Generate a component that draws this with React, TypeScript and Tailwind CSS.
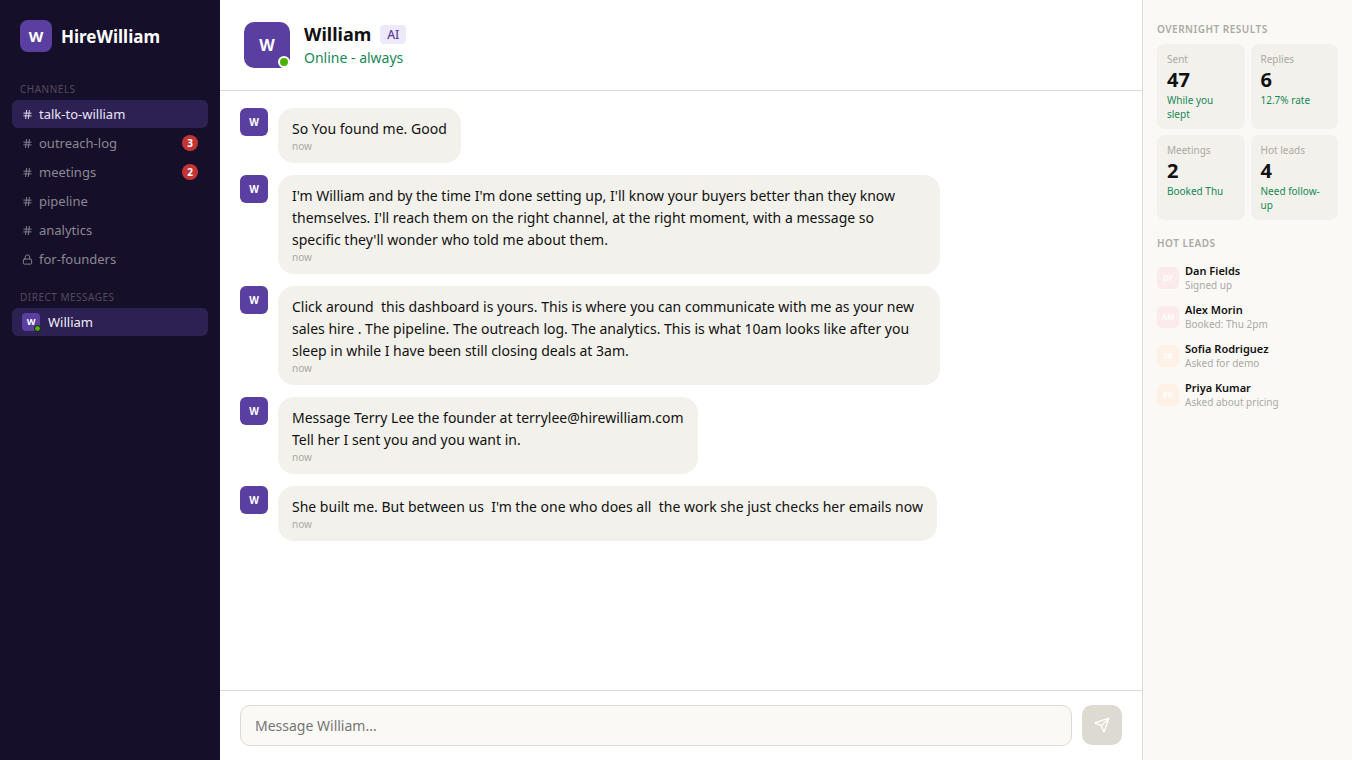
import { useState } from "react";
import { Hash, Lock, Send } from "lucide-react";

type Channel = { name: string; unread?: number; locked?: boolean };

const channels: Channel[] = [
  { name: "talk-to-william" },
  { name: "outreach-log", unread: 3 },
  { name: "meetings", unread: 2 },
  { name: "pipeline" },
  { name: "analytics" },
  { name: "for-founders", locked: true },
];

const messages = [
  "So You found me. Good",
  "I'm William and by the time I'm done setting up, I'll know your buyers better than they know themselves. I'll reach them on the right channel, at the right moment, with a message so specific they'll wonder who told me about them.",
  "Click around  this dashboard is yours. This is where you can communicate with me as your new sales hire . The pipeline. The outreach log. The analytics. This is what 10am looks like after you sleep in while I have been still closing deals at 3am.",
  "Message Terry Lee the founder at terrylee@hirewilliam.com\nTell her I sent you and you want in.",
  "She built me. But between us  I'm the one who does all  the work she just checks her emails now",
];

const stats = [
  { label: "Sent", value: "47", note: "While you slept" },
  { label: "Replies", value: "6", note: "12.7% rate" },
  { label: "Meetings", value: "2", note: "Booked Thu" },
  { label: "Hot leads", value: "4", note: "Need follow-up" },
];

const leads = [
  { initials: "DF", name: "Dan Fields", status: "Signed up", tone: "bg-[#fcebeb]" },
  { initials: "AM", name: "Alex Morin", status: "Booked: Thu 2pm", tone: "bg-[#fcebeb]" },
  { initials: "SR", name: "Sofia Rodriguez", status: "Asked for demo", tone: "bg-[#fff1e6]" },
  { initials: "PK", name: "Priya Kumar", status: "Asked about pricing", tone: "bg-[#fff1e6]" },
];

function Sidebar() {
  const [active, setActive] = useState("talk-to-william");
  return (
    <nav className="flex w-[220px] shrink-0 flex-col bg-[#160f29] px-3 py-5">
      <div className="flex items-center gap-[9px] px-2">
        <span className="flex size-8 items-center justify-center rounded-lg bg-[#5b3fa0] text-[15px] font-bold text-white">
          W
        </span>
        <span className="text-[17px] leading-[25px] font-bold text-white">HireWilliam</span>
      </div>

      <h2 className="mt-[30px] px-2 text-[10px] leading-[14px] tracking-wider text-[#514b60] uppercase">Channels</h2>
      <ul className="mt-1 flex flex-col gap-px">
        {channels.map((c) => {
          const Icon = c.locked ? Lock : Hash;
          return (
            <li key={c.name}>
              <button
                type="button"
                onClick={() => setActive(c.name)}
                className={`flex h-7 w-full items-center gap-[6px] rounded-md px-[10px] text-left text-[13px] leading-[18px] ${
                  active === c.name ? "bg-[#2d2153] text-[#e9e5f3]" : "text-[#8b8794]"
                }`}
              >
                <Icon className="size-[11px] shrink-0" aria-hidden="true" />
                <span className="flex-1">{c.name}</span>
                {c.unread && (
                  <span className="flex size-4 items-center justify-center rounded-full bg-[#c53434] text-[10px] font-bold text-white">
                    {c.unread}
                  </span>
                )}
              </button>
            </li>
          );
        })}
      </ul>

      <h2 className="mt-[17px] px-2 text-[10px] leading-[14px] tracking-wider text-[#514b60] uppercase">
        Direct messages
      </h2>
      <button
        type="button"
        className="mt-1 flex h-7 w-full items-center gap-2 rounded-md bg-[#2d2153] px-[10px] text-left text-[13px] leading-[18px] text-[#f1eef8]"
      >
        <span className="relative flex size-[18px] items-center justify-center rounded bg-[#5b3fa0] text-[9px] font-bold text-white">
          W
          <span className="absolute -right-px -bottom-px size-[7px] rounded-full border border-[#160f29] bg-[#47b300]" />
        </span>
        William
      </button>
    </nav>
  );
}

function Chat() {
  const [draft, setDraft] = useState("");
  return (
    <main className="flex min-w-0 flex-1 flex-col bg-white">
      <header className="flex items-center gap-[14px] border-b border-[#dddbd5] px-6 py-[21px]">
        <div className="relative flex size-[46px] items-center justify-center rounded-[10px] bg-[#5b3fa0] text-base font-bold text-white">
          W
          <span className="absolute right-0 bottom-0 size-3 rounded-full border-2 border-white bg-[#47b300]" />
        </div>
        <div>
          <div className="flex items-center gap-[9px]">
            <h1 className="text-lg leading-[26px] font-bold text-[#111111]">William</h1>
            <span className="rounded bg-[#ede8fa] px-[7px] text-xs leading-[19px] font-medium text-[#5b3fa0]">AI</span>
          </div>
          <p className="text-sm leading-[22px] text-[#188856]">Online - always</p>
        </div>
      </header>

      <ol className="flex min-h-0 flex-1 flex-col gap-3 overflow-y-auto px-5 py-[17px]">
        {messages.map((text) => (
          <li key={text} className="flex items-start gap-[10px]">
            <span className="flex size-7 shrink-0 items-center justify-center rounded-md bg-[#5b3fa0] text-[10px] font-bold text-white">
              W
            </span>
            <div className="max-w-[75%] rounded-2xl bg-[#f2f1eb] px-[14px] py-[10px]">
              <p className="text-sm leading-[22px] whitespace-pre-wrap text-[#111111]">{text}</p>
              <time className="block text-[10px] leading-[13px] text-[#aaaaa5]">now</time>
            </div>
          </li>
        ))}
      </ol>

      <form
        onSubmit={(e) => {
          e.preventDefault();
          setDraft("");
        }}
        className="flex items-start gap-[10px] border-t border-[#dddbd5] px-5 py-[14px]"
      >
        <input
          type="text"
          aria-label="Message William"
          placeholder="Message William..."
          value={draft}
          onChange={(e) => setDraft(e.target.value)}
          className="h-[41px] min-w-0 flex-1 rounded-[10px] border border-[#dddbd5] bg-[#faf9f5] px-[14px] text-sm text-[#111111] outline-none placeholder:text-[#757575]"
        />
        <button
          type="submit"
          aria-label="Send"
          className="flex size-10 shrink-0 items-center justify-center rounded-[10px] bg-[#dddad1] text-white"
        >
          <Send className="size-4" aria-hidden="true" />
        </button>
      </form>
    </main>
  );
}

function Results() {
  return (
    <aside className="w-[210px] shrink-0 border-l border-[#dddbd5] bg-[#faf9f5] px-[14px] py-[22px]">
      <h2 className="text-[10px] leading-[14px] font-semibold tracking-wider text-[#aaaaa5] uppercase">
        Overnight results
      </h2>
      <dl className="mt-2 grid grid-cols-2 gap-[6px]">
        {stats.map((s) => (
          <div key={s.label} className="rounded-lg bg-[#f2f1eb] px-[10px] py-2">
            <dt className="text-[10px] leading-[14px] text-[#aaaaa5]">{s.label}</dt>
            <dd className="text-xl leading-[27px] font-bold text-[#111111]">{s.value}</dd>
            <dd className="text-[10px] leading-[14px] text-[#188856]">{s.note}</dd>
          </div>
        ))}
      </dl>

      <h2 className="mt-4 text-[10px] leading-[14px] font-semibold tracking-wider text-[#aaaaa5] uppercase">
        Hot leads
      </h2>
      <ul className="mt-2">
        {leads.map((l) => (
          <li key={l.name} className="flex items-center gap-[6px] py-[5px]">
            <span
              className={`flex size-[22px] shrink-0 items-center justify-center rounded-[5px] text-[8px] font-bold text-white ${l.tone}`}
            >
              {l.initials}
            </span>
            <div>
              <p className="text-[11px] leading-[15px] font-semibold text-[#111111]">{l.name}</p>
              <p className="text-[10px] leading-[14px] text-[#aaaaa5]">{l.status}</p>
            </div>
          </li>
        ))}
      </ul>
    </aside>
  );
}

export default function App() {
  return (
    <div className="flex h-screen font-['Noto_Sans',sans-serif]">
      <Sidebar />
      <Chat />
      <Results />
    </div>
  );
}
